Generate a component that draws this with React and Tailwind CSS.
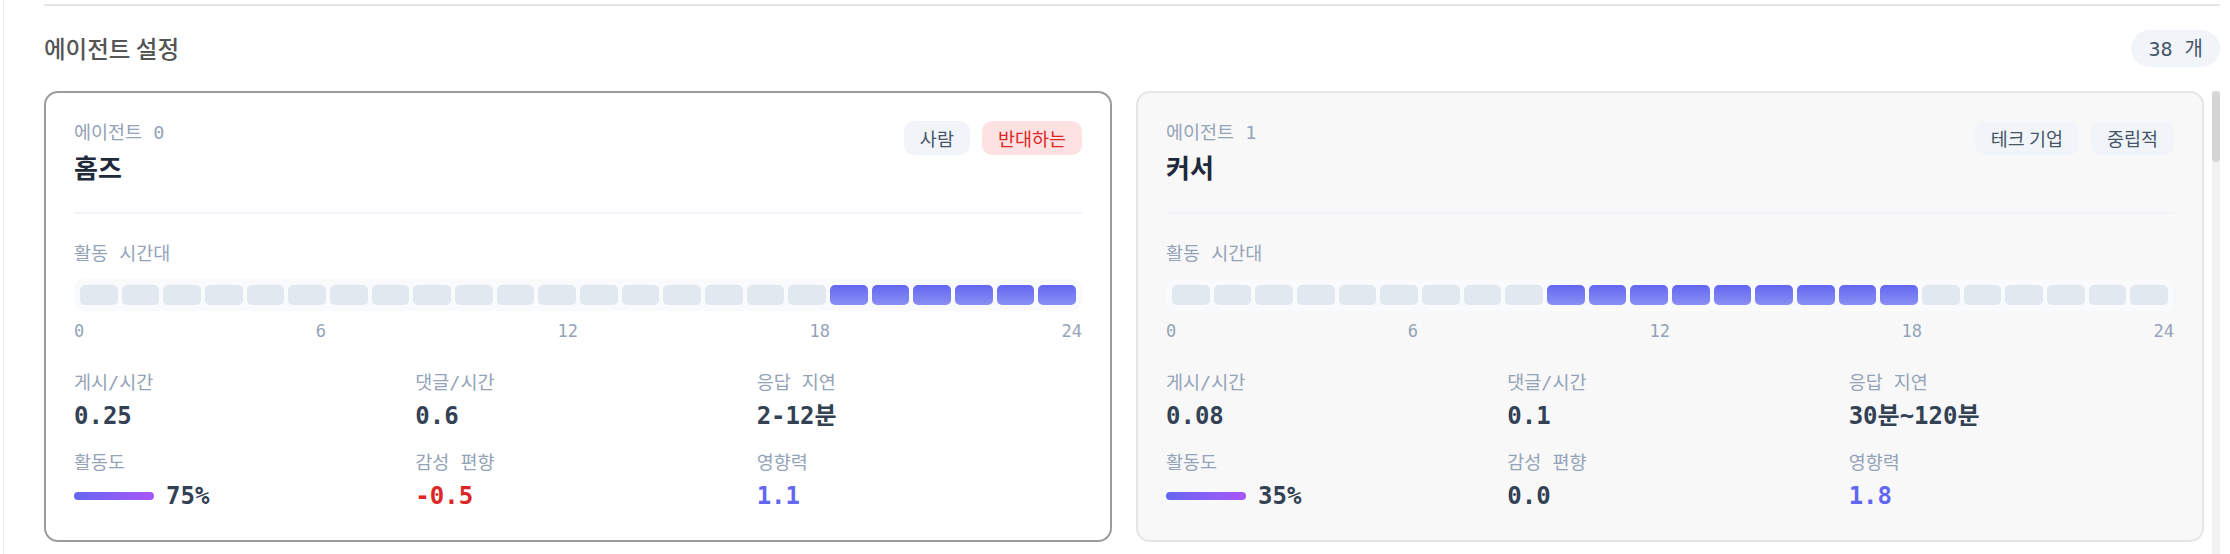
const mono = "font-['DejaVu_Sans_Mono','Noto_Sans_CJK_KR',monospace]";
const sans = "font-['Noto_Sans_CJK_KR','Noto_Sans',sans-serif]";

const range = (from, to) =>
  Array.from({ length: 24 }, (_, h) => h >= from && h < to);

const agents = [
  {
    name: "홈즈",
    tags: [
      { label: "사람", tone: "slate" },
      { label: "반대하는", tone: "red" },
    ],
    hours: range(18, 24),
    posts: "0.25",
    comments: "0.6",
    delay: "2-12분",
    activity: 75,
    sentiment: "-0.5",
    influence: "1.1",
  },
  {
    name: "커서",
    tags: [
      { label: "테크 기업", tone: "slate" },
      { label: "중립적", tone: "slate" },
    ],
    hours: range(9, 18),
    posts: "0.08",
    comments: "0.1",
    delay: "30분~120분",
    activity: 35,
    sentiment: "0.0",
    influence: "1.8",
  },
];

const totalAgents = 38;

const tagTone = {
  slate: "bg-[#f1f5f9] text-[#475569]",
  red: "bg-[#fee2e2] text-[#dc2626]",
};

const labelCls = `${mono} text-[18.5px] leading-6 text-[#94a3b8]`;
const valueCls = `${mono} text-2xl leading-8 font-bold`;

const Metric = ({ label, children }) => (
  <div>
    <div className={labelCls}>{label}</div>
    <div className="mt-[5px]">{children}</div>
  </div>
);

const AgentCard = ({ agent, index, selected }) => {
  const sentimentColor = agent.sentiment.startsWith("-")
    ? "text-[#dc2626]"
    : "text-[#334155]";

  return (
    <div
      className={
        selected
          ? "rounded-[14px] border-2 border-[#9b9b9b] bg-white p-7"
          : "rounded-[14px] border-2 border-[#e6e6e6] bg-[#f8f8f8] p-7"
      }
    >
      <div className="flex items-start justify-between border-b-2 border-[#f1f5f9] pb-7">
        <div>
          <div className={labelCls}>에이전트 {index}</div>
          <div className={`${sans} mt-[5px] text-[26px] leading-[34px] font-bold text-[#1e293b]`}>
            {agent.name}
          </div>
        </div>
        <div className="flex gap-3">
          {agent.tags.map((tag) => (
            <span
              key={tag.label}
              className={`${sans} ${tagTone[tag.tone]} rounded-[10px] px-4 py-[6px] text-[18.5px] leading-[22px]`}
            >
              {tag.label}
            </span>
          ))}
        </div>
      </div>

      <div className="pt-7">
        <div className={labelCls}>활동 시간대</div>
        <div className="mt-[13px] flex gap-1 rounded-[10px] bg-[#f8fafc] p-1.5">
          {agent.hours.map((on, h) => (
            <div
              key={h}
              className={
                on
                  ? "h-5 flex-1 rounded-[5px] bg-linear-to-b from-[#6366f1] to-[#8b8ff4]"
                  : "h-5 flex-1 rounded-[5px] bg-[#e2e8f0]"
              }
            />
          ))}
        </div>
        <div className={`${mono} mt-[10px] flex justify-between text-[17px] leading-5 text-[#94a3b8]`}>
          <span>0</span>
          <span>6</span>
          <span>12</span>
          <span>18</span>
          <span>24</span>
        </div>
      </div>

      <div className="mt-[30px] grid grid-cols-3 gap-x-4 gap-y-[19px]">
        <Metric label="게시/시간">
          <div className={`${valueCls} text-[#334155]`}>{agent.posts}</div>
        </Metric>
        <Metric label="댓글/시간">
          <div className={`${valueCls} text-[#334155]`}>{agent.comments}</div>
        </Metric>
        <Metric label="응답 지연">
          <div className={`${valueCls} text-[#334155]`}>{agent.delay}</div>
        </Metric>
        <Metric label="활동도">
          <div className="flex items-center gap-3">
            <div className="h-2 w-[80px] rounded-full bg-linear-to-r from-[#6366f1] to-[#a855f7]" />
            <span className={`${valueCls} text-[#334155]`}>{agent.activity}%</span>
          </div>
        </Metric>
        <Metric label="감성 편향">
          <div className={`${valueCls} ${sentimentColor}`}>{agent.sentiment}</div>
        </Metric>
        <Metric label="영향력">
          <div className={`${valueCls} text-[#6366f1]`}>{agent.influence}</div>
        </Metric>
      </div>
    </div>
  );
};

export default function App() {
  return (
    <div className="h-[554px] overflow-hidden bg-white pl-[3px]">
      <div className="h-full border-l border-[#ececec] pr-[10px] pl-10 pt-1">
        <section className="border-t-2 border-[#e5e5e5]">
          <div className="mt-6 flex h-[37px] items-center justify-between">
            <h2 className={`${sans} text-[23.5px] font-medium text-[#555555]`}>
              에이전트 설정
            </h2>
            <span
              className={`${mono} flex h-[37px] items-center rounded-full bg-[#f1f5f9] px-[17px] text-[20px] text-[#475569]`}
            >
              {totalAgents} 개
            </span>
          </div>

          <div className="mt-6 flex h-[463px] overflow-hidden">
            <div className="min-w-0 flex-1 pr-2">
              <div className="grid grid-cols-2 gap-6">
                {agents.map((agent, i) => (
                  <AgentCard key={i} agent={agent} index={i} selected={i === 0} />
                ))}
              </div>
            </div>
            {/* scrollbar */}
            <div className="w-2 shrink-0 bg-[#f1f1f1]">
              <div className="h-[71px] rounded-full bg-[#d6d6d6]" />
            </div>
          </div>
        </section>
      </div>
    </div>
  );
}
